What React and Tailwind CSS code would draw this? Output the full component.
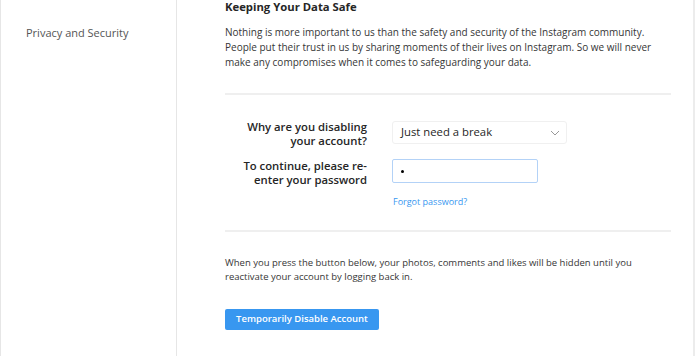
export default function App() {
  const font = { fontFamily: '"Open Sans", "Noto Sans", sans-serif' };
  return (
    <div className="w-[696px] h-[356px] bg-white flex overflow-hidden text-[#262626]" style={font}>
      <aside className="w-[177px] shrink-0 border-l border-r border-[#e6e6e6] pt-[25px] pl-[25px]">
        <div className="text-[11px] leading-[16px] text-[#555]">Privacy and Security</div>
      </aside>
      <main className="w-[518px] shrink-0 border-r-2 border-[#ececec] pl-[48px] pr-[22px]">
        <h2 className="text-[11.3px] leading-[14px] font-bold">Keeping Your Data Safe</h2>
        <p className="text-[10px] leading-[15px] mt-[11px] text-[#363636]">
          Nothing is more important to us than the safety and security of the Instagram community. People put their trust in us by sharing moments of their lives on Instagram. So we will never make any compromises when it comes to safeguarding your data.
        </p>
        <div className="border-t-2 border-[#efefef] mt-[23px]" />
        <div className="grid grid-cols-[142px_1fr] gap-x-[25px] gap-y-[11px] items-start mt-[25px]">
          <label className="text-right text-[11.3px] leading-[14px] font-semibold">Why are you disabling your account?</label>
          <div className="w-[175px] h-[23px] mt-[1px] border border-[#f0f0f0] rounded-[3px] flex items-center justify-between pl-[8px] pr-[6px]">
            <span className="text-[11.3px]">Just need a break</span>
            <svg width="10" height="6" viewBox="0 0 10 6" fill="none" stroke="#999" strokeWidth="1">
              <path d="M1 1l4 4 4-4" />
            </svg>
          </div>
          <label className="text-right text-[11.3px] leading-[13.5px] font-semibold">To continue, please re-enter your password</label>
          <div className="w-[146px] h-[24px] border border-[#b3d2f7] rounded-[2px] flex items-center pl-[8px]">
            <span className="w-[3px] h-[3px] rounded-full bg-black" />
          </div>
          <div />
          <a className="text-[9px] leading-[12px] text-[#3897f0] mt-[-1px] ml-[1px]">Forgot password?</a>
        </div>
        <div className="border-t-2 border-[#efefef] mt-[22px]" />
        <p className="text-[9.5px] leading-[14px] mt-[24px] text-[#363636]">
          When you press the button below, your photos, comments and likes will be hidden until you reactivate your account by logging back in.
        </p>
        <button className="mt-[25px] w-[154px] h-[21px] bg-[#3897f0] rounded-[2px] text-white text-[9.5px] font-semibold">
          Temporarily Disable Account
        </button>
      </main>
    </div>
  );
}
